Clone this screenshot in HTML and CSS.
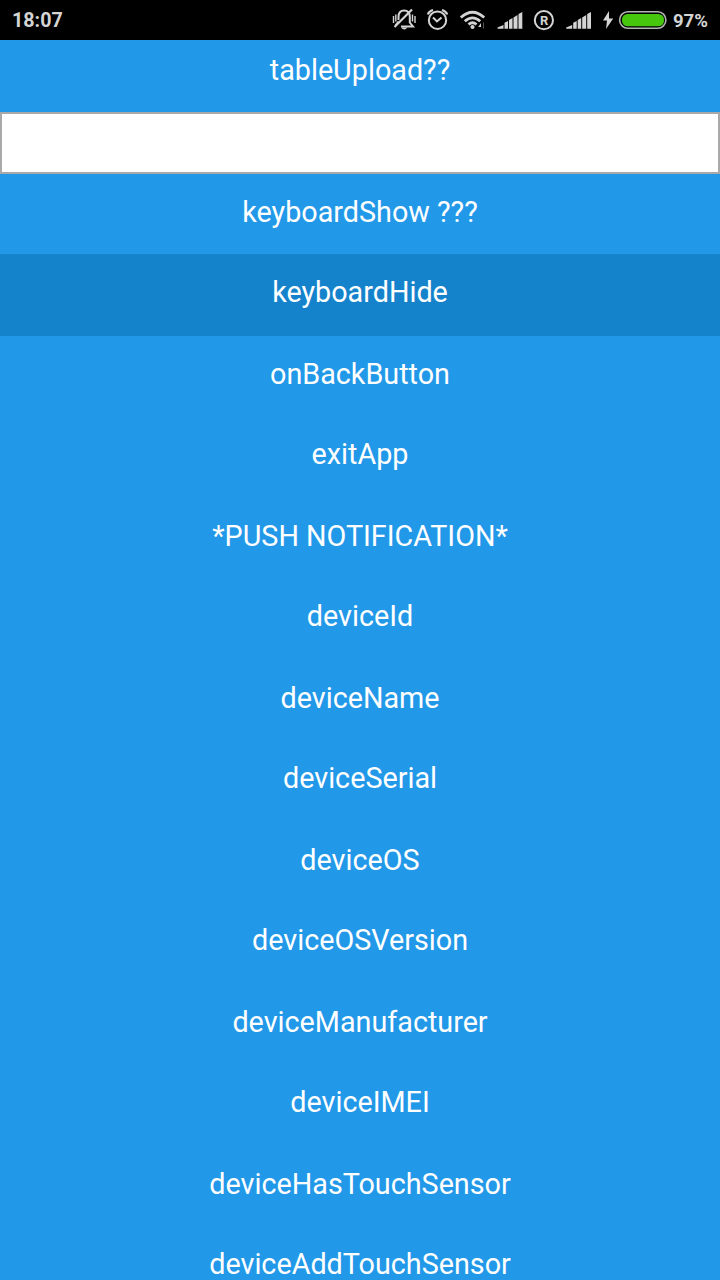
FILE: index.html
```html
<!DOCTYPE html>
<html lang="en">
<head>
<meta charset="utf-8">
<title>Device functions</title>
<link rel="stylesheet" href="styles.css">
</head>
<body>
<header class="status">
  <span class="clock">18:07</span>
  <div class="status-icons">
    <svg width="35" height="40" viewBox="388 0 35 40" fill="none" stroke="#d4d4d4" stroke-width="2">
      <path d="M398.500 20V17C398.500 12.500 400 10.500 404 10.500S409.800 12.500 409.800 17V22.500L413 26.500H401M398.500 21.500L395.500 25.500"/>
      <path d="M393.500 16V23M395.800 14.500V21.500M412.500 14.500V21.500M415 16V23" stroke-width="1.400"/>
      <path d="M394.500 27L412 9.500" stroke-width="2.200"/>
      <path d="M401 27.500H407.500Q404.200 31.500 401 27.500Z" fill="#d4d4d4" stroke="none"/>
    </svg>
    <svg width="33" height="40" viewBox="423 0 33 40" fill="none" stroke="#d4d4d4" stroke-width="2">
      <circle cx="437.500" cy="20.200" r="8.700"/>
      <path d="M433 17.500L437 21.500L441.500 17.500"/>
      <path d="M427.800 14.500Q429 11 433 10M447.200 14.500Q446 11 442 10" stroke-width="2.200"/>
    </svg>
    <svg width="36" height="40" viewBox="456 0 36 40" fill="none" stroke="#d4d4d4" stroke-width="2.800">
      <path d="M460.800 17.500Q472.500 7 484.200 17.500M464.800 21.200Q472.500 14.500 480.200 21.200M468.500 24.500Q472.500 21 476.500 24.500"/>
      <circle cx="472.500" cy="27" r="2.100" fill="#d4d4d4" stroke="none"/>
      <path d="M478.200 27H481V23Z" fill="#d4d4d4" stroke="none"/>
      <path d="M483.500 22.500V28.500" stroke="#555" stroke-width="1"/>
    </svg>
    <svg width="37" height="40" viewBox="492 0 37 40" fill="#d4d4d4">
      <path d="M497.500 28.800V27.500L503.500 25V28.800ZM504.500 28.800V22.800L508 21V28.800ZM509 28.800V20L512.500 18V28.800ZM513.500 28.800V17.500L517.500 15V28.800ZM518.500 28.800V14L522.300 12V28.800Z"/>
    </svg>
    <svg width="32" height="40" viewBox="529 0 32 40">
      <circle cx="543.900" cy="20.200" r="9.100" fill="none" stroke="#d4d4d4" stroke-width="2"/>
      <text class="roaming" x="544.200" y="24.500" text-anchor="middle">R</text>
    </svg>
    <svg width="37" height="40" viewBox="561 0 37 40" fill="#d4d4d4">
      <path d="M566.200 28.800V27.500L572.200 25V28.800ZM573.200 28.800V22.800L576.700 21V28.800ZM577.700 28.800V20L581.200 18V28.800ZM582.200 28.800V17.500L586.200 15V28.800ZM587.200 28.800V14L591 12V28.800Z"/>
    </svg>
    <svg width="75" height="40" viewBox="598 0 75 40">
      <path d="M609 11L603 20.500H607L606 29L613.200 18.500H609Z" fill="#d4d4d4"/>
      <rect x="619.600" y="11.700" width="46.300" height="16.600" rx="8.300" fill="#000" stroke="#b4b4b4" stroke-width="1.600"/>
      <rect x="622" y="14" width="42" height="12.300" rx="5.500" fill="#46c60c"/>
    </svg>
  </div>
  <span class="charge">97%</span>
</header>
<main class="list">
  <div class="row first">tableUpload??</div>
  <input class="field" type="text" aria-label="Text">
  <div class="row">keyboardShow ???</div>
  <div class="row pressed">keyboardHide</div>
  <div class="row">onBackButton</div>
  <div class="row">exitApp</div>
  <div class="row">*PUSH NOTIFICATION*</div>
  <div class="row">deviceId</div>
  <div class="row">deviceName</div>
  <div class="row">deviceSerial</div>
  <div class="row">deviceOS</div>
  <div class="row">deviceOSVersion</div>
  <div class="row">deviceManufacturer</div>
  <div class="row">deviceIMEI</div>
  <div class="row">deviceHasTouchSensor</div>
  <div class="row">deviceAddTouchSensor</div>
</main>
</body>
</html>
```
FILE: styles.css
```css
* { box-sizing: border-box; }
body {
  margin: 0;
  height: 1280px;
  overflow: hidden;
  display: flex;
  flex-direction: column;
  background: #2298e9;
  font-family: Roboto, sans-serif;
}
.status {
  flex: none;
  height: 40px;
  display: flex;
  align-items: flex-start;
  background: #000;
  color: #d4d4d4;
  padding-left: 12px;
  font-size: 19.7px;
  font-weight: 700;
  line-height: 40px;
}
.clock { width: 376px; padding-top: 1px; line-height: 39px; }
.clock, .charge { line-height: 40px; }
.status-icons { display: flex; height: 40px; }
.status-icons svg { display: block; flex: none; }
.charge { padding-top: 1px; font-size: 18.5px; }
.roaming { font: 700 13px Roboto, sans-serif; fill: #d4d4d4; }
.list {
  flex: 1;
  min-height: 0;
  overflow: hidden;
  display: flex;
  flex-direction: column;
}
.row {
  flex: none;
  height: 80px;
  padding-top: 21px;
  color: #fff;
  font-size: 28.74px;
  line-height: 34px;
  text-align: center;
}
.row:nth-child(even) { height: 82px; }
.row.first { height: 72px; padding-top: 13px; }
.row.pressed { background: #1583cc; }
.field {
  flex: none;
  display: block;
  width: 100%;
  height: 62px;
  margin: 0;
  border: 2px solid #a9a9a9;
  border-radius: 0;
  background: #fff;
}
```
